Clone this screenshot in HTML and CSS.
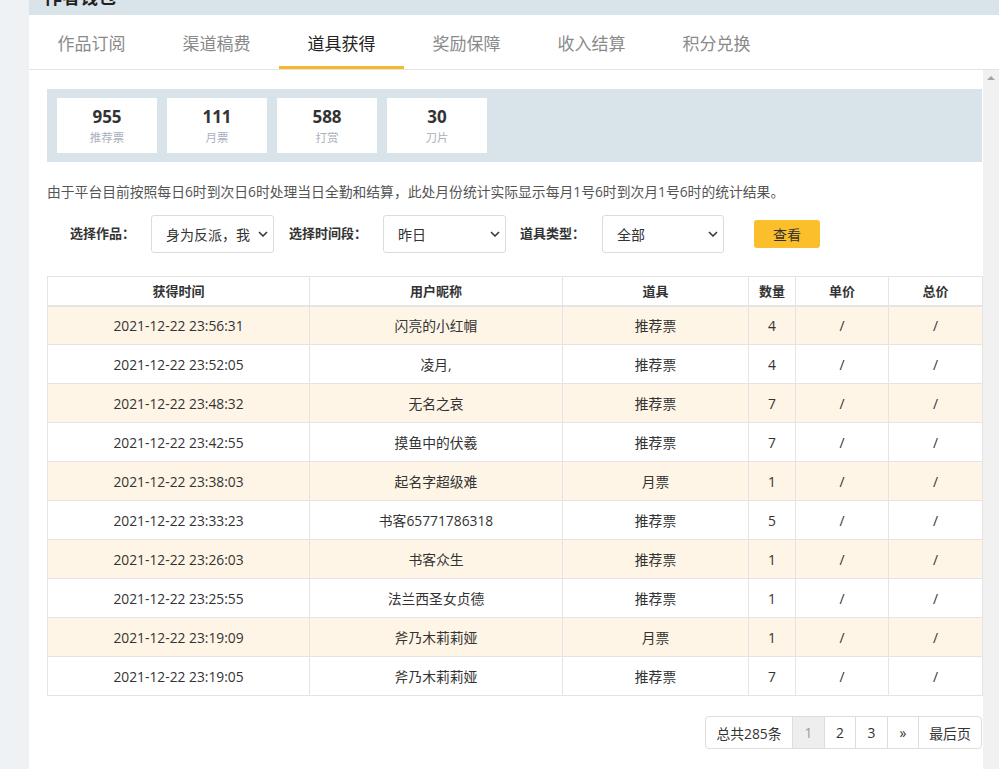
FILE: index.html
```html
<!DOCTYPE html>
<html lang="zh-CN">
<head>
<meta charset="utf-8">
<title>作者钱包 - 道具获得</title>
<link rel="stylesheet" href="styles.css">
</head>
<body>
<div class="page">
  <div class="side"></div>
  <div class="main">
    <div class="topbar"><h1 class="title">作者钱包</h1></div>
    <nav class="tabs">
      <a class="tab">作品订阅</a>
      <a class="tab">渠道稿费</a>
      <a class="tab active">道具获得</a>
      <a class="tab">奖励保障</a>
      <a class="tab">收入结算</a>
      <a class="tab">积分兑换</a>
    </nav>
    <div class="viewport">
      <div class="content">
        <div class="stats">
          <div class="stat"><div class="num">955</div><div class="lbl">推荐票</div></div>
          <div class="stat"><div class="num">111</div><div class="lbl">月票</div></div>
          <div class="stat"><div class="num">588</div><div class="lbl">打赏</div></div>
          <div class="stat"><div class="num">30</div><div class="lbl">刀片</div></div>
        </div>
        <p class="note">由于平台目前按照每日6时到次日6时处理当日全勤和结算，此处月份统计实际显示每月1号6时到次月1号6时的统计结果。</p>
        <div class="filters">
          <span class="flabel l1">选择作品：</span>
          <div class="select s1"><span class="sval">身为反派，我是</span><svg class="chev" width="10" height="6" viewBox="0 0 10 6"><path d="M1 1l4 4 4-4" fill="none" stroke="#333" stroke-width="1.5"/></svg></div>
          <span class="flabel l2">选择时间段：</span>
          <div class="select s2"><span class="sval">昨日</span><svg class="chev" width="10" height="6" viewBox="0 0 10 6"><path d="M1 1l4 4 4-4" fill="none" stroke="#333" stroke-width="1.5"/></svg></div>
          <span class="flabel l3">道具类型：</span>
          <div class="select s3"><span class="sval">全部</span><svg class="chev" width="10" height="6" viewBox="0 0 10 6"><path d="M1 1l4 4 4-4" fill="none" stroke="#333" stroke-width="1.5"/></svg></div>
          <button class="btn">查看</button>
        </div>
        <table class="grid">
          <colgroup>
            <col class="c1"><col class="c2"><col class="c3"><col class="c4"><col class="c5"><col class="c6">
          </colgroup>
          <thead>
            <tr><th>获得时间</th><th>用户昵称</th><th>道具</th><th>数量</th><th>单价</th><th>总价</th></tr>
          </thead>
          <tbody>
            <tr class="odd"><td>2021-12-22 23:56:31</td><td>闪亮的小红帽</td><td>推荐票</td><td>4</td><td>/</td><td>/</td></tr>
            <tr><td>2021-12-22 23:52:05</td><td>凌月,</td><td>推荐票</td><td>4</td><td>/</td><td>/</td></tr>
            <tr class="odd"><td>2021-12-22 23:48:32</td><td>无名之哀</td><td>推荐票</td><td>7</td><td>/</td><td>/</td></tr>
            <tr><td>2021-12-22 23:42:55</td><td>摸鱼中的伏羲</td><td>推荐票</td><td>7</td><td>/</td><td>/</td></tr>
            <tr class="odd"><td>2021-12-22 23:38:03</td><td>起名字超级难</td><td>月票</td><td>1</td><td>/</td><td>/</td></tr>
            <tr><td>2021-12-22 23:33:23</td><td>书客65771786318</td><td>推荐票</td><td>5</td><td>/</td><td>/</td></tr>
            <tr class="odd"><td>2021-12-22 23:26:03</td><td>书客众生</td><td>推荐票</td><td>1</td><td>/</td><td>/</td></tr>
            <tr><td>2021-12-22 23:25:55</td><td>法兰西圣女贞德</td><td>推荐票</td><td>1</td><td>/</td><td>/</td></tr>
            <tr class="odd"><td>2021-12-22 23:19:09</td><td>斧乃木莉莉娅</td><td>月票</td><td>1</td><td>/</td><td>/</td></tr>
            <tr><td>2021-12-22 23:19:05</td><td>斧乃木莉莉娅</td><td>推荐票</td><td>7</td><td>/</td><td>/</td></tr>
          </tbody>
        </table>
        <div class="pager-row">
          <ul class="pager">
            <li class="pg total">总共285条</li>
            <li class="pg cur">1</li>
            <li class="pg w31">2</li>
            <li class="pg">3</li>
            <li class="pg w31">»</li>
            <li class="pg last">最后页</li>
          </ul>
        </div>
      </div>
      <div class="scrollbar"><span class="arrow-up"></span></div>
    </div>
  </div>
</div>
</body>
</html>
```

FILE: styles.css
```css
* { box-sizing: border-box; }
html, body { margin: 0; padding: 0; }
body {
  font-family: "Open Sans", "Noto Sans CJK SC", sans-serif;
  color: #333;
  background: #fff;
}
.page { display: flex; width: 999px; height: 769px; overflow: hidden; }
.side { width: 29px; flex: none; background: #eef2f5; }
.main { flex: 1; display: flex; flex-direction: column; min-width: 0; }

.topbar { height: 15px; flex: none; background: #d9e4ea; overflow: hidden; padding-left: 15px; }
.title { margin: -12px 0 0; font-size: 18px; line-height: 18px; font-weight: 700; color: #222; }

.tabs { height: 55px; flex: none; display: flex; border-bottom: 1px solid #e4e4e4; background: #fff; }
.tab {
  width: 125px; display: flex; align-items: center; justify-content: center;
  font-size: 17px; color: #8a8a8a; border-bottom: 3px solid transparent;
  padding-top: 4px;
}
.tab.active { color: #222; border-bottom-color: #f7b92b; }

.viewport { flex: 1; display: flex; min-height: 0; }
.content { flex: 1; padding: 19px 1px 0 18px; min-width: 0; }
.scrollbar { width: 16px; flex: none; background: #f1f1f1; display: flex; justify-content: center; padding-top: 6px; }
.arrow-up { width: 0; height: 0; border-left: 4px solid transparent; border-right: 4px solid transparent; border-bottom: 4px solid #a3a3a3; }

.stats { height: 73px; background: #d9e4ea; padding: 9px 10px; display: flex; gap: 10px; }
.stat { width: 100px; height: 55px; background: #fff; display: flex; flex-direction: column; align-items: center; justify-content: center; padding-top: 2px; }
.num { font-size: 17px; font-weight: 700; line-height: 20px; color: #333; }
.lbl { font-size: 11.5px; line-height: 16px; margin-top: 3px; color: #a9b1bd; }

.note { margin: 20px 0 0; font-size: 13.8px; line-height: 20px; color: #555; white-space: nowrap; }

.filters { margin-top: 13px; height: 38px; display: flex; align-items: center; padding-left: 23px; }
.flabel { font-size: 13px; font-weight: 700; color: #333; flex: none; padding-bottom: 3px; }
.l1 { width: 81px; }
.l2 { width: 94px; margin-left: 15px; }
.l3 { width: 82px; margin-left: 14px; }
.select {
  height: 38px; border: 1px solid #dcdcdc; border-radius: 3px; background: #fff;
  display: flex; align-items: center; padding: 0 5px 0 14px; gap: 8px; flex: none;
}
.s1 { width: 123px; }
.s2 { width: 123px; }
.s3 { width: 122px; }
.sval { flex: 1; min-width: 0; overflow: hidden; white-space: nowrap; font-size: 14px; color: #333; }
.chev { flex: none; }
.btn {
  margin-left: 30px; width: 66px; height: 28px; border: 0; border-radius: 3px;
  background: #fbbf2b; color: #333; font-family: inherit; font-size: 14px; padding: 0;
}

.grid { margin-top: 23px; width: 935px; border-collapse: collapse; table-layout: fixed; font-size: 13.8px; }
.c1 { width: 262px; } .c2 { width: 253px; } .c3 { width: 186px; }
.c4 { width: 47px; } .c5 { width: 93px; } .c6 { width: 94px; }
.grid th, .grid td { border: 1px solid #e4e4e4; text-align: center; padding: 0; color: #333; }
.grid th { height: 29px; font-weight: 700; font-size: 13px; border-bottom: 2px solid #e4e4e4; }
.grid td { height: 39px; }
.grid tr.odd td { background: #fef5e6; }

.pager-row { margin-top: 20px; display: flex; justify-content: flex-end; }
.pager { list-style: none; margin: 0; padding: 0; display: flex; border: 1px solid #ddd; border-radius: 4px; overflow: hidden; }
.pg { height: 31px; display: flex; align-items: center; justify-content: center; font-size: 13.8px; color: #333; border-left: 1px solid #ddd; width: 32px; }
.pg.w31 { width: 31px; }
.pg.total { border-left: 0; width: 86px; }
.pg.cur { background: #eee; color: #999; }
.pg.last { width: 63px; }
```
